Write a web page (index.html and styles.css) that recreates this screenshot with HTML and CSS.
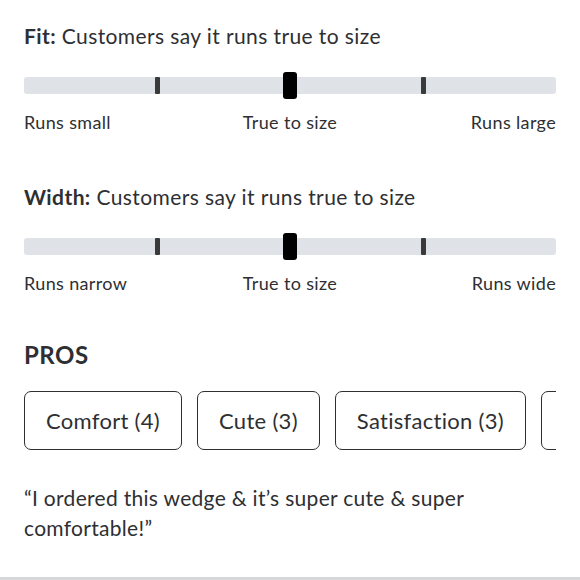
FILE: index.html
```html
<!DOCTYPE html>
<html>
<head>
<meta charset="utf-8">
<link rel="stylesheet" href="styles.css">
</head>
<body>
<div class="page">
  <section class="fit">
    <h3 class="fit-title"><b>Fit:</b> Customers say it runs true to size</h3>
    <div class="track">
      <span class="tick t1"></span>
      <span class="thumb"></span>
      <span class="tick t3"></span>
    </div>
    <div class="labels"><span class="l">Runs small</span><span class="c">True to size</span><span class="r">Runs large</span></div>
  </section>
  <section class="fit">
    <h3 class="fit-title"><b>Width:</b> Customers say it runs true to size</h3>
    <div class="track">
      <span class="tick t1"></span>
      <span class="thumb"></span>
      <span class="tick t3"></span>
    </div>
    <div class="labels"><span class="l">Runs narrow</span><span class="c">True to size</span><span class="r">Runs wide</span></div>
  </section>
  <section class="pros">
    <h2 class="pros-title">PROS</h2>
    <div class="chips">
      <button class="chip">Comfort (4)</button>
      <button class="chip">Cute (3)</button>
      <button class="chip">Satisfaction (3)</button>
      <button class="chip">Style (2)</button>
    </div>
    <p class="quote">“I ordered this wedge &amp; it’s super cute &amp; super comfortable!”</p>
  </section>
  <div class="divider"></div>
</div>
</body>
</html>
```
FILE: styles.css
```css
html, body {
  margin: 0;
  padding: 0;
  background: #fff;
}
body {
  font-family: Lato, "Open Sans", sans-serif;
  color: #2e2f32;
  width: 580px;
  height: 580px;
  overflow: hidden;
}
.page {
  display: flex;
  flex-direction: column;
  height: 580px;
}
.fit {
  padding: 0 24px;
}
.fit:first-child {
  padding-top: 24px;
}
.fit + .fit {
  margin-top: 52px;
}
.fit-title {
  margin: 0;
  font-size: 21px;
  letter-spacing: 0.4px;
  font-weight: 400;
  line-height: 24px;
  color: #2e2f32;
}
.fit-title b {
  font-weight: 700;
}
.track {
  position: relative;
  margin-top: 29px;
  height: 17px;
  background: #dfe2e6;
  border-radius: 3px;
}
.tick {
  position: absolute;
  top: 0;
  width: 5px;
  height: 17px;
  background: #3a3a3a;
  border-radius: 1px;
}
.t1 { left: 131px; }
.t3 { left: 397px; }
.thumb {
  position: absolute;
  top: -5px;
  left: 259px;
  width: 14px;
  height: 27px;
  background: #000;
  border-radius: 3px;
}
.labels {
  display: grid;
  grid-template-columns: 1fr auto 1fr;
  margin-top: 17px;
  font-size: 18px;
  letter-spacing: 0.35px;
  line-height: 22px;
  color: #2e2f32;
}
.labels .l { justify-self: start; }
.labels .c { justify-self: center; }
.labels .r { justify-self: end; }
.pros {
  padding: 0 24px;
  margin-top: 48px;
}
.pros-title {
  margin: 0;
  font-size: 24px;
  letter-spacing: 0.5px;
  font-weight: 700;
  line-height: 26px;
  color: #2e2f32;
}
.chips {
  display: flex;
  gap: 15px;
  margin-top: 23px;
  overflow: hidden;
}
.chip {
  flex: none;
  height: 59px;
  padding: 0 21px;
  background: #fff;
  border: 1.5px solid #2e2f32;
  border-radius: 7px;
  font-family: inherit;
  font-size: 22px;
  letter-spacing: 0.3px;
  color: #2e2f32;
}
.quote {
  margin: 33px 0 0;
  font-size: 21px;
  letter-spacing: 0.3px;
  line-height: 30px;
  color: #2e2f32;
}
.divider {
  margin-top: auto;
  height: 3px;
  background: #d6d7d9;
}
```
